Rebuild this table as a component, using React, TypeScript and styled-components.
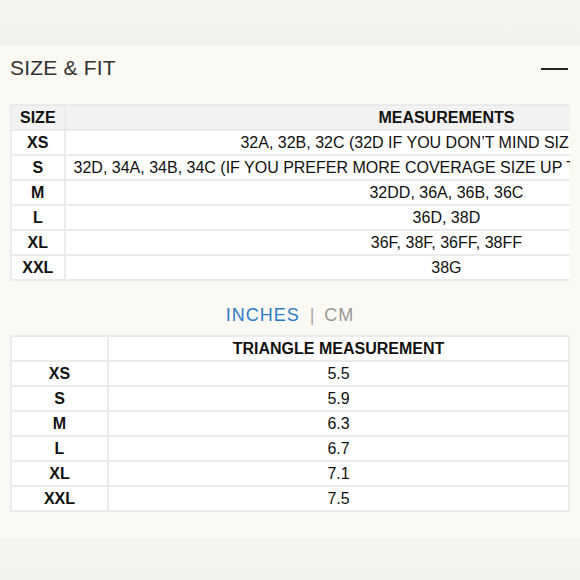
import React, { useState } from "react";
import styled, { createGlobalStyle } from "styled-components";

type Row = { size: string; value: string };

const BRA_SIZES: Row[] = [
  { size: "XS", value: "32A, 32B, 32C (32D IF YOU DON\u2019T MIND SIZING DOWN" },
  { size: "S", value: "32D, 34A, 34B, 34C (IF YOU PREFER MORE COVERAGE SIZE UP TO A MEDIUM FOR THESE TOPS)" },
  { size: "M", value: "32DD, 36A, 36B, 36C" },
  { size: "L", value: "36D, 38D" },
  { size: "XL", value: "36F, 38F, 36FF, 38FF" },
  { size: "XXL", value: "38G" },
];

const TRIANGLE: Record<"in" | "cm", Row[]> = {
  in: [
    { size: "XS", value: "5.5" },
    { size: "S", value: "5.9" },
    { size: "M", value: "6.3" },
    { size: "L", value: "6.7" },
    { size: "XL", value: "7.1" },
    { size: "XXL", value: "7.5" },
  ],
  cm: [
    { size: "XS", value: "14" },
    { size: "S", value: "15" },
    { size: "M", value: "16" },
    { size: "L", value: "17" },
    { size: "XL", value: "18" },
    { size: "XXL", value: "19" },
  ],
};

export default function App() {
  const [unit, setUnit] = useState<"in" | "cm">("in");

  return (
    <>
      <Global />
      <Band />
      <Panel>
        <Header>
          <Title>SIZE &amp; FIT</Title>
          <Collapse aria-label="collapse" />
        </Header>

        {/* the measurements column is wider than the panel, so it is cut at the edge */}
        <Clip>
          <Table>
            <thead>
              <tr>
                <HeadCell grey>SIZE</HeadCell>
                <HeadCell grey>MEASUREMENTS</HeadCell>
              </tr>
            </thead>
            <tbody>
              {BRA_SIZES.map((r) => (
                <tr key={r.size}>
                  <SizeCell>{r.size}</SizeCell>
                  <ValueCell>{r.value}</ValueCell>
                </tr>
              ))}
            </tbody>
          </Table>
        </Clip>

        <Units>
          <UnitButton active={unit === "in"} onClick={() => setUnit("in")}>INCHES</UnitButton>
          <Divider>|</Divider>
          <UnitButton active={unit === "cm"} onClick={() => setUnit("cm")}>CM</UnitButton>
        </Units>

        <FullTable>
          <colgroup>
            <col style={{ width: 97 }} />
            <col />
          </colgroup>
          <thead>
            <tr>
              <HeadCell />
              <HeadCell>TRIANGLE MEASUREMENT</HeadCell>
            </tr>
          </thead>
          <tbody>
            {TRIANGLE[unit].map((r) => (
              <tr key={r.size}>
                <SizeCell>{r.size}</SizeCell>
                <ValueCell>{r.value}</ValueCell>
              </tr>
            ))}
          </tbody>
        </FullTable>
      </Panel>
      <Band />
    </>
  );
}

// ================= Styled =================
const Global = createGlobalStyle`
  body{margin:0;background:#f5f3ee;font-family:"Liberation Sans",Arial,sans-serif;color:#111;}
`;
const Band = styled.div`height:46px;background:linear-gradient(180deg,#f6f4ef,#f3f1ec);`;
const Panel = styled.section`background:#fbf9f3;padding:10px 10px 26px;`;
const Header = styled.header`display:flex;align-items:center;justify-content:space-between;height:24px;`;
const Title = styled.h2`margin:0;font-size:21px;line-height:24px;font-weight:400;color:#333;letter-spacing:0.2px;`;
const Collapse = styled.button`width:27px;height:2px;padding:0;border:none;background:#222;margin:2px 2px 0 0;`;
const Clip = styled.div`margin-top:24px;width:560px;overflow:hidden;`;
const Table = styled.table`border-collapse:collapse;background:#fff;font-size:16px;`;
const FullTable = styled(Table)`width:560px;table-layout:fixed;`;
const cell = `border:2px solid #ebebea;height:23px;line-height:23px;padding:0 8px;text-align:center;white-space:nowrap;`;
const HeadCell = styled.th<{ grey?: boolean }>`${cell}font-weight:700;background:${({ grey }) => (grey ? "#f2f2f2" : "#fff")};`;
const SizeCell = styled.td`${cell}font-weight:700;`;
const ValueCell = styled.td`${cell}font-weight:400;`;
const Units = styled.div`display:flex;justify-content:center;align-items:center;gap:10px;height:24px;margin:22px 0 8px;`;
const UnitButton = styled.button<{ active?: boolean }>`border:none;background:none;padding:0;font-family:inherit;font-size:18px;letter-spacing:1px;cursor:pointer;color:${({ active }) => (active ? "#2a7cc7" : "#999")};`;
const Divider = styled.span`font-size:18px;color:#aaa;`;
